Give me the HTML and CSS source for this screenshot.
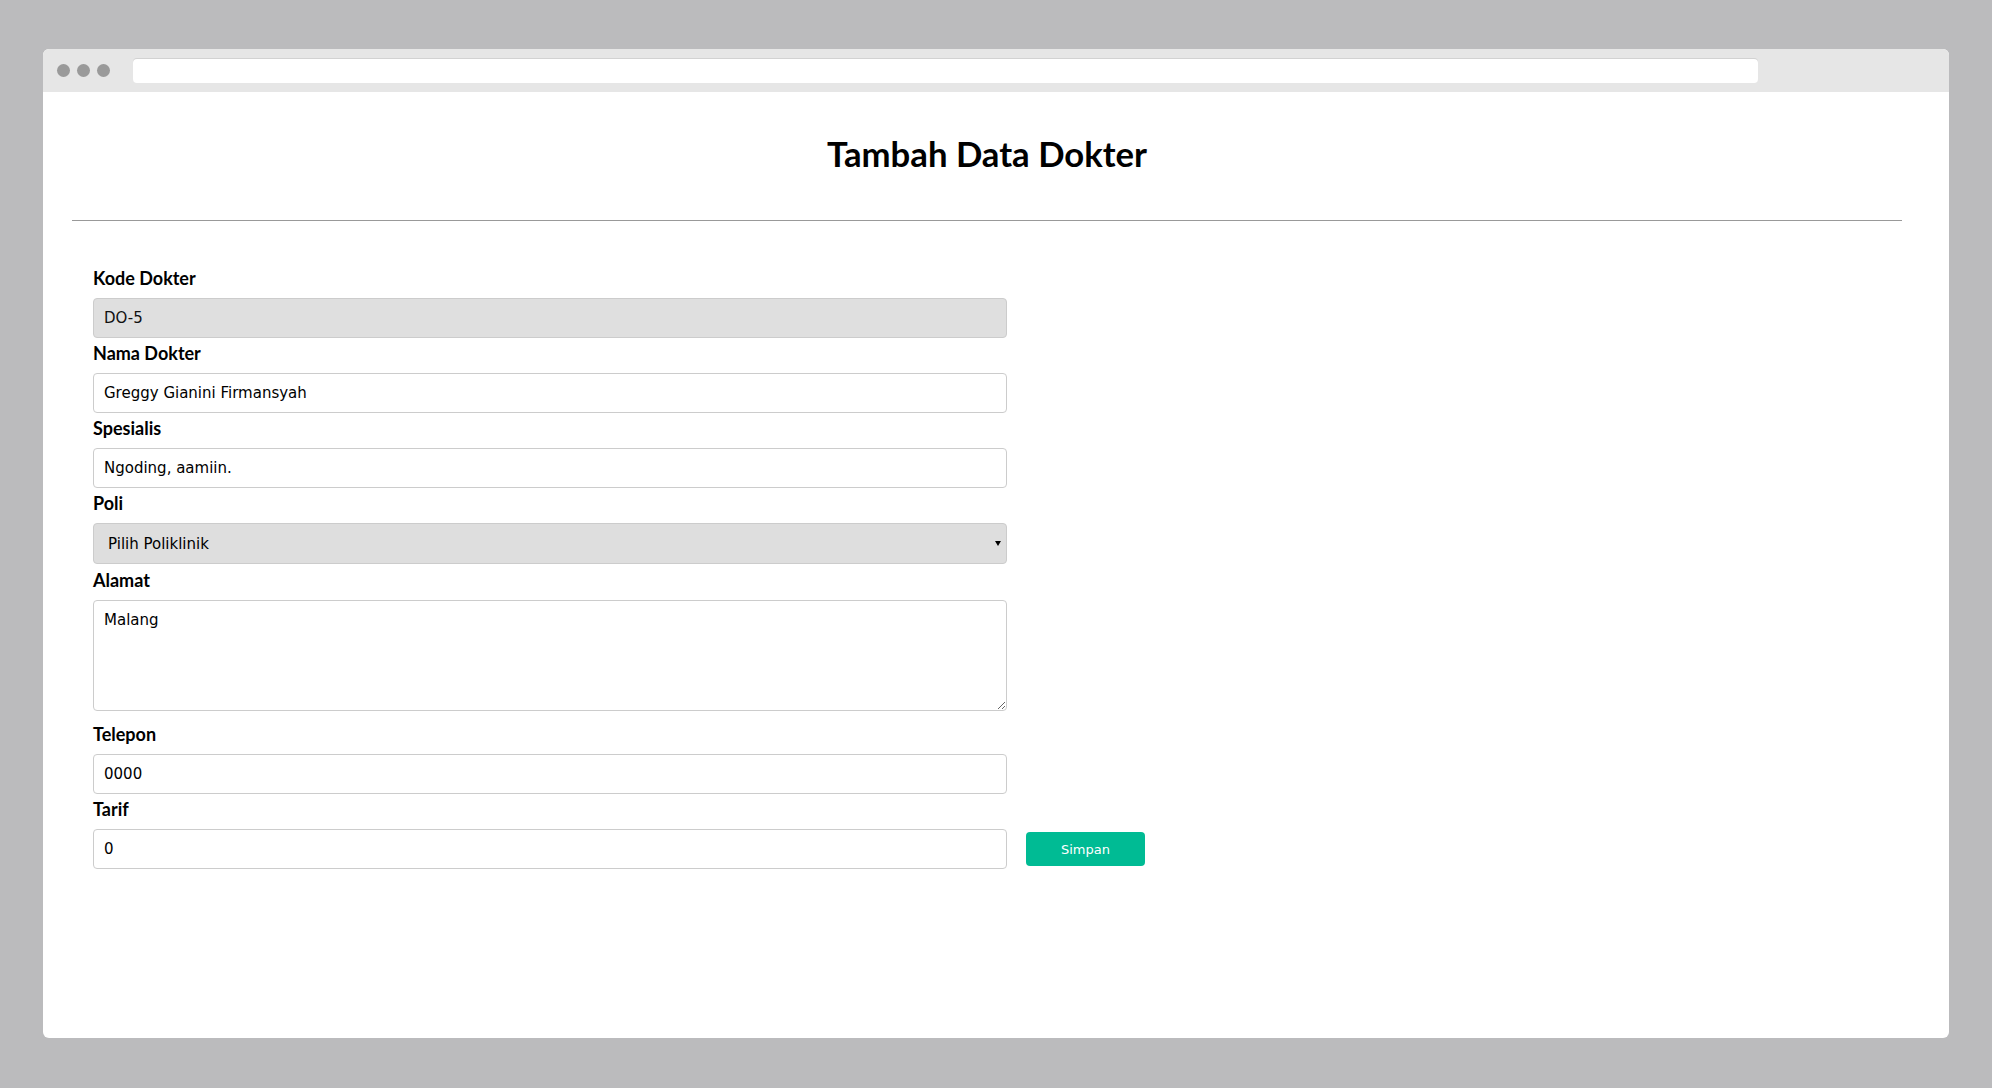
FILE: index.html
```html
<!DOCTYPE html>
<html lang="id">
<head>
<meta charset="utf-8">
<title>Tambah Data Dokter</title>
<link rel="stylesheet" href="styles.css">
</head>
<body>
<div class="window">
  <div class="toolbar">
    <div class="dots"><span class="dot"></span><span class="dot"></span><span class="dot"></span></div>
    <div class="urlbar"></div>
  </div>
  <div class="content">
    <h1 class="title">Tambah Data Dokter</h1>
    <hr class="divider">
    <form class="form">
      <label class="label">Kode Dokter</label>
      <input class="field" type="text" value="DO-5" disabled>
      <label class="label">Nama Dokter</label>
      <input class="field" type="text" value="Greggy Gianini Firmansyah">
      <label class="label">Spesialis</label>
      <input class="field" type="text" value="Ngoding, aamiin.">
      <label class="label">Poli</label>
      <div class="select-wrap">
        <select class="field select"><option>Pilih Poliklinik</option></select>
      </div>
      <label class="label">Alamat</label>
      <textarea class="field area" spellcheck="false">Malang</textarea>
      <label class="label">Telepon</label>
      <input class="field" type="text" value="0000">
      <label class="label">Tarif</label>
      <div class="row">
        <input class="field" type="text" value="0">
        <button type="button" class="btn">Simpan</button>
      </div>
    </form>
  </div>
</div>
</body>
</html>
```
FILE: styles.css
```css
html, body {
  margin: 0;
  padding: 0;
}
body {
  background: #bbbbbd;
  padding: 49px 43px 50px 43px;
  font-family: "Lato", "DejaVu Sans", sans-serif;
}
.window {
  background: #ffffff;
  height: 989px;
  border-radius: 6px;
  overflow: hidden;
  display: flex;
  flex-direction: column;
}
.toolbar {
  height: 43px;
  background: #e6e6e6;
  display: flex;
  align-items: center;
  padding-left: 14px;
  padding-right: 191px;
  box-sizing: border-box;
}
.dots {
  display: flex;
  gap: 7px;
  margin-right: 23px;
}
.dot {
  width: 13px;
  height: 13px;
  border-radius: 50%;
  background: #9a9a9a;
}
.urlbar {
  flex: 1;
  height: 24px;
  background: #ffffff;
  border-radius: 4px;
  box-shadow: 0 -1px 0 #d2d2d2;
}
.content {
  padding: 0 47px 0 29px;
}
.title {
  margin: 41px 0 0 0;
  text-align: center;
  font-family: "Lato", sans-serif;
  font-weight: 700;
  font-size: 34.7px;
  line-height: 42px;
  color: #000;
}
.divider {
  margin: 45px 0 0 0;
  border: 0;
  border-top: 1px solid #999;
  height: 0;
}
.form {
  padding: 47px 0 0 21px;
  width: 914px;
}
.label {
  display: block;
  font-family: "Lato", sans-serif;
  font-weight: 700;
  font-size: 18px;
  line-height: 20px;
  margin-bottom: 10px;
  color: #000;
}
.field {
  display: block;
  box-sizing: border-box;
  width: 914px;
  height: 40px;
  margin: 0 0 5px 0;
  padding: 0 10px;
  border: 1px solid #cccccc;
  border-radius: 4px;
  background: #ffffff;
  font-family: "DejaVu Sans", sans-serif;
  font-size: 15px;
  color: #000;
}
.field:disabled {
  background: #dfdfdf;
  color: #111;
}
.select-wrap {
  position: relative;
  width: 914px;
  margin-bottom: 6px;
}
.select-wrap::after {
  content: "";
  position: absolute;
  right: 6px;
  top: 18px;
  width: 0;
  height: 0;
  border-left: 3px solid transparent;
  border-right: 3px solid transparent;
  border-top: 5px solid #000;
  pointer-events: none;
}
.select {
  height: 41px;
  margin-bottom: 0;
  background: #dedede;
  padding-left: 14px;
  -webkit-appearance: none;
  appearance: none;
}
.area {
  height: 111px;
  padding: 10px;
  margin-bottom: 13px;
  resize: vertical;
  line-height: normal;
}
.row {
  display: flex;
  align-items: center;
  gap: 19px;
}
.row .field {
  margin-bottom: 0;
  flex: none;
}
.btn {
  flex: none;
  width: 119px;
  height: 34px;
  border: 0;
  border-radius: 4px;
  background: #00bb94;
  color: #ffffff;
  font-family: "DejaVu Sans", sans-serif;
  font-size: 13px;
  padding: 0;
}
```
